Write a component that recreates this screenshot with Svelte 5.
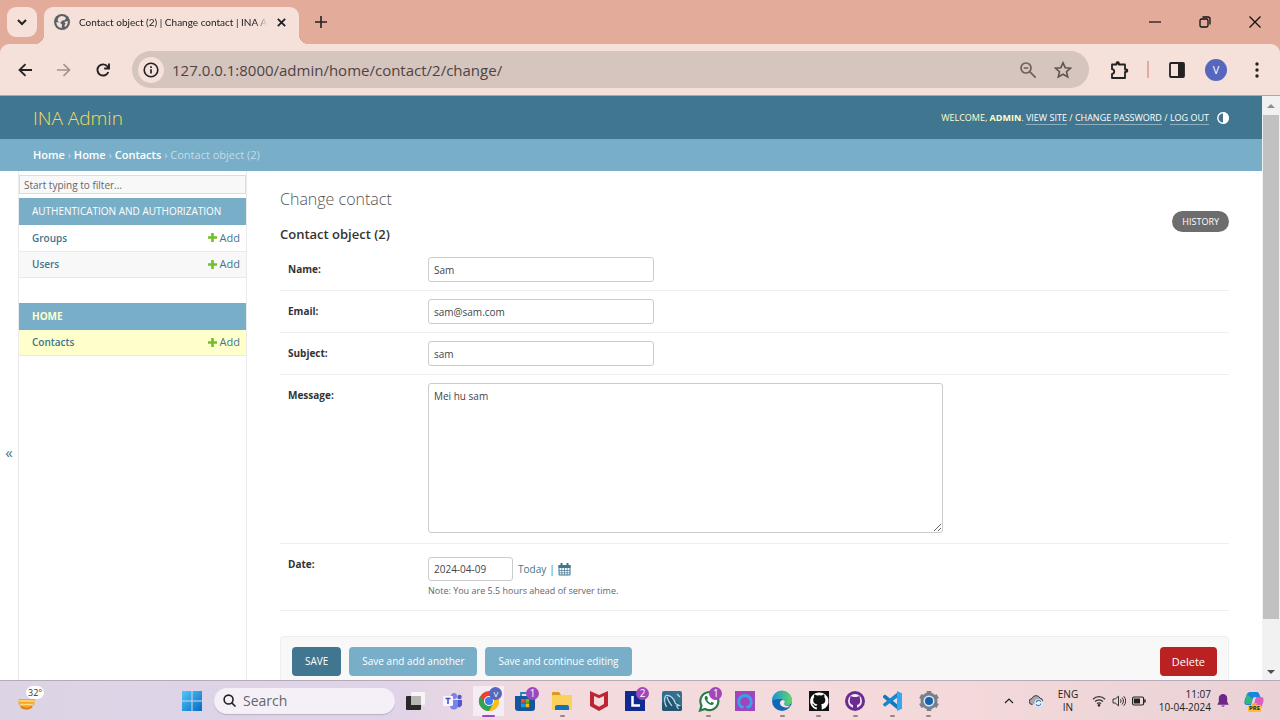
<script lang="ts">
	let contact = $state({
		name: 'Sam',
		email: 'sam@sam.com',
		subject: 'sam',
		message: 'Mei hu sam',
		date: '2024-04-09'
	});
	let address = $state('127.0.0.1:8000/admin/home/contact/2/change/');
	let filter = $state('');
	let search = $state('');

	const apps = [
		{ label: 'AUTHENTICATION AND AUTHORIZATION', current: false, models: ['Groups', 'Users'] },
		{ label: 'HOME', current: true, models: ['Contacts'] }
	];

	const taskbar = [
		{ id: 'taskview', label: 'Task view' },
		{ id: 'teams', label: 'Teams' },
		{ id: 'chrome', label: 'Chrome', active: true },
		{ id: 'store', label: 'Store', badge: '1' },
		{ id: 'files', label: 'File Explorer', running: true },
		{ id: 'mcafee', label: 'McAfee' },
		{ id: 'lenovo', label: 'Lenovo', badge: '2' },
		{ id: 'mysql', label: 'MySQL Workbench' },
		{ id: 'whatsapp', label: 'WhatsApp', badge: '1', running: true },
		{ id: 'alexa', label: 'Alexa' },
		{ id: 'edge', label: 'Edge', running: true },
		{ id: 'github', label: 'GitHub', running: true },
		{ id: 'desktop', label: 'GitHub Desktop', running: true },
		{ id: 'vscode', label: 'VS Code', running: true },
		{ id: 'settings', label: 'Settings', running: true }
	];
</script>

{#snippet cat()}
	<path d="M12 3.5a8.7 8.7 0 0 0-2.8 17c.5.1.6-.2.6-.5v-1.8c-2.4.5-3-1-3.2-1.6-.2-.4-.6-1-1-1.2-.4-.2-.9-.7 0-.7.8 0 1.300.7 1.500 1 .9 1.500 2.300 1.100 2.800.8.1-.6.4-1 .6-1.300-2.100-.2-4.300-1-4.300-4.500 0-1 .4-1.900 1-2.500-.1-.3-.4-1.300.1-2.600 0 0 .8-.3 2.600 1a9 9 0 0 1 4.700 0c1.800-1.300 2.600-1 2.600-1 .5 1.300.2 2.300.1 2.600.6.6 1 1.500 1 2.500 0 3.500-2.200 4.300-4.300 4.500.4.3.7.9.7 1.800V20c0 .3.1.6.6.5A8.700 8.700 0 0 0 12 3.500z" />
{/snippet}

<div class="screen">
	<header class="browser">
		<div class="tabs">
			<button class="tab-search" aria-label="Search tabs">
				<svg viewBox="0 0 12 12" width="12" height="12"><path d="M2 4l4 4 4-4" fill="none" stroke="#222" stroke-width="2" /></svg>
			</button>
			<div class="tab">
				<svg viewBox="0 0 16 16" width="16" height="16">
					<circle cx="8" cy="8" r="8" fill="#5b6066" />
					<path d="M7.500 2c1.800 0 3.500.8 4.500 2.200l-1.500 2-2.500.3-.8 1.700-2.300.2L3.500 6C4 3.800 5.500 2.200 7.500 2zM2.300 8.300l3.500.3 2.200 2-.3 3.300C4.800 13.800 2.500 11.500 2.300 8.300zM13.700 7c.4 2.300-.6 4.600-2.500 5.900l-.9-1.500 1.400-2-1.500-1.400z" fill="#f5e0da" />
				</svg>
				<span class="tab-title">Contact object (2) | Change contact | INA A</span>
				<button class="plain" aria-label="Close tab">
					<svg viewBox="0 0 12 12" width="11" height="11"><path d="M2 2l8 8M10 2l-8 8" stroke="#222" stroke-width="2" /></svg>
				</button>
			</div>
			<button class="plain new-tab" aria-label="New tab">
				<svg viewBox="0 0 12 12" width="12" height="12"><path d="M6 0v12M0 6h12" stroke="#222" stroke-width="1.600" /></svg>
			</button>
			<div class="window-buttons">
				<button class="plain" aria-label="Minimize">
					<svg viewBox="0 0 12 12" width="12" height="12"><path d="M0 6h12" stroke="#111" stroke-width="1.200" /></svg>
				</button>
				<button class="plain" aria-label="Restore">
					<svg viewBox="0 0 12 12" width="12" height="12" fill="none" stroke="#111" stroke-width="1.300">
						<rect x="1" y="3" width="8" height="8" rx="1.500" />
						<path d="M3.500 1h5.500a2 2 0 0 1 2 2v5.500" />
					</svg>
				</button>
				<button class="plain" aria-label="Close">
					<svg viewBox="0 0 12 12" width="12" height="12"><path d="M.5.5l11 11M11.500.5l-11 11" stroke="#111" stroke-width="1.300" /></svg>
				</button>
			</div>
		</div>
		<div class="toolbar">
			<button class="plain nav" aria-label="Back">
				<svg viewBox="0 0 14 14" width="14" height="14" fill="none" stroke="#222" stroke-width="1.800"><path d="M14 7H2M7.500 1.200L1.500 7l6 5.800" /></svg>
			</button>
			<button class="plain nav" aria-label="Forward">
				<svg viewBox="0 0 14 14" width="14" height="14" fill="none" stroke="#a3918c" stroke-width="1.600"><path d="M0 7h12M6.500 1.200l6 5.800-6 5.800" /></svg>
			</button>
			<button class="plain nav" aria-label="Reload">
				<svg viewBox="0 0 14 14" width="14" height="14" fill="none" stroke="#222" stroke-width="1.900"><path d="M12.300 9A5.600 5.600 0 1 1 11.500 3.500L13 5.200M13 .5v5H8.200" /></svg>
			</button>
			<div class="address">
				<button class="site-info" aria-label="View site information">
					<svg viewBox="0 0 16 16" width="16" height="16"><circle cx="8" cy="8" r="6.800" fill="none" stroke="#222" stroke-width="1.600" /><path d="M8 7.200v4.200M8 4.300v1.700" stroke="#222" stroke-width="1.700" /></svg>
				</button>
				<input type="text" aria-label="Address" bind:value={address} />
				<button class="plain" aria-label="Zoom">
					<svg viewBox="0 0 16 16" width="16" height="16" fill="none" stroke="#6b605d" stroke-width="1.700"><circle cx="6" cy="6" r="5" /><path d="M9.700 9.700l6 6M3.700 6h4.600" /></svg>
				</button>
				<button class="plain star" aria-label="Bookmark">
					<svg viewBox="0 0 18 18" width="18" height="18"><path d="M9 1.800l2.200 4.900 5.300.5-4 3.500 1.200 5.200L9 13.200l-4.700 2.700 1.200-5.200-4-3.500 5.300-.5z" fill="none" stroke="#5f5552" stroke-width="1.600" /></svg>
				</button>
			</div>
			<button class="plain extensions" aria-label="Extensions">
				<svg viewBox="0 0 20 20" width="20" height="20"><path d="M3 4.500h4.500V3.300a1 1 0 0 1 2.400 0v1.200H16v5h1.200a1 1 0 0 1 0 2.400H16V18H3v-4.200c3-.3 3-4.300 0-4.600z" fill="none" stroke="#222" stroke-width="1.800" stroke-linejoin="round" /><path d="M7.200 4.200V3a1.500 1.500 0 0 1 3 0v1.200zM16.500 9.200h1a1.500 1.500 0 0 1 0 3h-1z" fill="#222" /></svg>
			</button>
			<span class="divider"></span>
			<button class="plain panel" aria-label="Side panel">
				<svg viewBox="0 0 16 16" width="16" height="16"><rect x="1" y="1" width="14" height="14" rx="1" fill="none" stroke="#222" stroke-width="1.800" /><path d="M9 1h6v14H9z" fill="#222" /></svg>
			</button>
			<button class="avatar" aria-label="Profile">V</button>
			<button class="plain" aria-label="Menu">
				<svg viewBox="0 0 4 16" width="4" height="16" fill="#222"><circle cx="2" cy="2" r="1.700" /><circle cx="2" cy="8" r="1.700" /><circle cx="2" cy="14" r="1.700" /></svg>
			</button>
		</div>
	</header>

	<div class="viewport">
		<div class="page">
			<div class="header">
				<a class="site-name" href="/admin/">INA Admin</a>
				<div class="user-tools">
					<span>
						WELCOME, <strong>ADMIN</strong>. <a href="/">VIEW SITE</a> / <a href="/admin/password_change/">CHANGE PASSWORD</a> / <a href="/admin/logout/">LOG OUT</a>
					</span>
					<button class="plain theme" aria-label="Toggle theme">
						<svg viewBox="0 0 12 12" width="12" height="12"><circle cx="6" cy="6" r="5.200" fill="none" stroke="#fff" stroke-width="1.400" /><path d="M6 0a6 6 0 0 1 0 12z" fill="#fff" /></svg>
					</button>
				</div>
			</div>
			<nav class="breadcrumbs">
				<a href="/admin/">Home</a> › <a href="/admin/home/">Home</a> › <a href="/admin/home/contact/">Contacts</a> › Contact object (2)
			</nav>
			<div class="main">
				<button class="nav-toggle" aria-label="Toggle navigation">«</button>
				<aside>
					<input class="filter" type="search" placeholder="Start typing to filter..." aria-label="Filter navigation items" bind:value={filter} />
					{#each apps as app}
						<table class:current={app.current}>
							<caption>{app.label}</caption>
							<tbody>
								{#each app.models as model}
									<tr>
										<th scope="row"><a href="/admin/">{model}</a></th>
										<td>
											<a href="/admin/">
												<svg viewBox="0 0 9 9" width="9" height="9"><path d="M4.500 0v9M0 4.500h9" stroke="#70bf2b" stroke-width="2.600" /></svg>
												Add
											</a>
										</td>
									</tr>
								{/each}
							</tbody>
						</table>
					{/each}
				</aside>
				<main>
					<div class="title-row">
						<h1>Change contact</h1>
						<a class="history" href="/admin/history/">HISTORY</a>
					</div>
					<h2>Contact object (2)</h2>
					<form onsubmit={(e) => e.preventDefault()}>
						<div class="row">
							<label for="name">Name:</label>
							<input id="name" type="text" bind:value={contact.name} />
						</div>
						<div class="row">
							<label for="email">Email:</label>
							<input id="email" type="text" bind:value={contact.email} />
						</div>
						<div class="row">
							<label for="subject">Subject:</label>
							<input id="subject" type="text" bind:value={contact.subject} />
						</div>
						<div class="row">
							<label for="message">Message:</label>
							<textarea id="message" bind:value={contact.message}></textarea>
						</div>
						<div class="row date-row">
							<label for="date">Date:</label>
							<div>
								<div class="date">
									<input id="date" type="text" bind:value={contact.date} />
									<a href="#today">Today</a> |
									<a href="#calendar" aria-label="Choose a date">
										<svg viewBox="0 0 13 13" width="13" height="13">
											<path d="M1 2.500h11V12H1z" fill="#fff" stroke="#417690" />
											<path d="M.5 2h12v3H.5z" fill="#417690" />
											<path d="M3.500 0v3M9.500 0v3" stroke="#417690" stroke-width="2" />
											<path d="M1 7.500h11M1 9.800h11M3.800 5v7M6.500 5v7M9.200 5v7" stroke="#417690" stroke-width=".7" />
										</svg>
									</a>
								</div>
								<p class="note">Note: You are 5.5 hours ahead of server time.</p>
							</div>
						</div>
						<div class="submit-row">
							<button class="save">SAVE</button>
							<button>Save and add another</button>
							<button>Save and continue editing</button>
							<a class="delete" href="/admin/delete/">Delete</a>
						</div>
					</form>
				</main>
			</div>
		</div>
		<div class="scrollbar">
			<svg viewBox="0 0 10 5" width="8" height="4"><path d="M5 0l5 5H0z" fill="#8f8f8f" /></svg>
			<div class="track"><div class="thumb"></div></div>
			<svg viewBox="0 0 10 5" width="8" height="4"><path d="M0 0h10L5 5z" fill="#505050" /></svg>
		</div>
	</div>

	<footer class="taskbar">
		<button class="plain weather" aria-label="Weather">
			<svg viewBox="0 0 18 16" width="18" height="16">
				<path d="M1 5a8 8 0 0 0 1 7.500A9 7 0 0 0 16 11l1-6z" fill="#f5a623" />
				<path d="M1 7h15M2 10.500h13" stroke="#ffdc8a" stroke-width="1.500" />
				<path d="M3 12.800c4 2.500 8 2.200 11 0" stroke="#e27d12" stroke-width="2" fill="none" />
			</svg>
			<span>32°</span>
		</button>
		<div class="start-group">
			<button class="plain start" aria-label="Start">
				<svg viewBox="0 0 20 20" width="20" height="20">
					<defs><linearGradient id="win" x1="0" y1="0" x2="1" y2="1"><stop offset="0" stop-color="#4fc9f7" /><stop offset="1" stop-color="#0669c6" /></linearGradient></defs>
					<path d="M0 0h9.500v9.500H0zM10.500 0H20v9.500h-9.500zM0 10.500h9.500V20H0zM10.500 10.500H20V20h-9.500z" fill="url(#win)" />
				</svg>
			</button>
			<label class="search">
				<svg viewBox="0 0 14 14" width="13" height="13" fill="none" stroke="#222" stroke-width="1.700"><circle cx="6" cy="6" r="4.800" /><path d="M9.500 9.500l4 4" /></svg>
				<input type="text" placeholder="Search" aria-label="Search Windows" bind:value={search} />
			</label>
		</div>
		<div class="apps">
			{#each taskbar as app}
				<button class="app" class:active={app.active} class:running={app.running} aria-label={app.label}>
					<svg viewBox="0 0 24 24" width="24" height="24">
						{#if app.id === 'taskview'}
							<rect x="3" y="7" width="15" height="14" rx="1" fill="#292929" />
							<rect x="8" y="3" width="14" height="13" rx="1" fill="#f6f4f4" />
							<path d="M8 7h10v9H8z" fill="#b8b6b4" />
						{:else if app.id === 'teams'}
							<circle cx="14" cy="7" r="3" fill="#7b83eb" />
							<circle cx="19.500" cy="8" r="2.200" fill="#5059c9" />
							<path d="M16 11h6v4.500a3 3 0 0 1-5 2z" fill="#5059c9" />
							<path d="M10 11h8v5a4 4 0 0 1-8 1z" fill="#7b83eb" />
							<rect x="3" y="7" width="10" height="10" rx="1" fill="#f7f5fd" />
							<path d="M5.500 9.500h5M8 9.500V15" stroke="#464eb8" stroke-width="1.500" />
						{:else if app.id === 'chrome'}
							<circle cx="12" cy="12" r="10" fill="#e94235" />
							<path d="M3.300 7A10 10 0 0 0 12 22l4.300-7.500H7.700z" fill="#31a354" />
							<path d="M12 22a10 10 0 0 0 8.700-15H12l4.300 7.500z" fill="#fbc116" />
							<circle cx="12" cy="12" r="5" fill="#fff" />
							<circle cx="12" cy="12" r="4" fill="#3b7ded" />
						{:else if app.id === 'store'}
							<path d="M8 7V4h8v3" fill="none" stroke="#1a84c7" stroke-width="1.800" />
							<path d="M2 7h20v12a3 3 0 0 1-3 3H5a3 3 0 0 1-3-3z" fill="#17559b" />
							<path d="M8 10h3.700v3.700H8z" fill="#f25022" /><path d="M12.500 10h3.700v3.700h-3.700z" fill="#7fba00" /><path d="M8 14.500h3.700v3.700H8z" fill="#00a4ef" /><path d="M12.500 14.500h3.700v3.700h-3.700z" fill="#ffb900" />
						{:else if app.id === 'files'}
							<path d="M2 4a1 1 0 0 1 1-1h6l2 3h10a1 1 0 0 1 1 1v4H2z" fill="#d99a1e" />
							<rect x="2" y="6" width="20" height="15" rx="1" fill="#fbd05b" />
							<path d="M5 21v-3a2 2 0 0 1 2-2h10a2 2 0 0 1 2 2v3z" fill="#1473b8" />
						{:else if app.id === 'mcafee'}
							<path d="M3 2l9 4 9-4v15l-9 5-9-5zm4 5v8l5 2.800 5-2.800V7l-5 2.300z" fill="#bd2532" fill-rule="evenodd" />
						{:else if app.id === 'lenovo'}
							<rect x="2" y="2" width="20" height="20" fill="#102a91" />
							<path d="M9.500 7v9.500H17" fill="none" stroke="#fff" stroke-width="2.500" />
						{:else if app.id === 'mysql'}
							<rect x="2" y="2" width="20" height="20" rx="2" fill="#34708d" />
							<path d="M2 14l8-7 12 10v3a2 2 0 0 1-2 2H4a2 2 0 0 1-2-2z" fill="#235673" />
							<path d="M6.500 18c-2.500-5-2.500-10-.5-11.500 4-1 8 3 9.500 8l4 2-3 .5 2 3M7 8c1 4 3 6 5 9M17 5l3 3" fill="none" stroke="#b5dce9" stroke-width="1.200" />
						{:else if app.id === 'whatsapp'}
							<path d="M3 21.500l1.500-5A9 9 0 1 1 8 20z" fill="#fff" stroke="#2c7a49" stroke-width="2.200" />
							<path d="M8.500 7c-1.300 1-1.200 2.800.3 5 1.700 2.500 4 4 6 4 1.500-.2 2.200-1.200 2-2.200l-2.300-1-1 1.200c-1.500-.5-2.700-1.700-3.300-3.200l.8-1L10 7z" fill="#2c7a49" />
						{:else if app.id === 'alexa'}
							<rect x="2" y="2" width="20" height="20" fill="#a145bd" />
							<path d="M9.500 18.500a6.300 6.300 0 1 1 5 0" fill="none" stroke="#35a3ed" stroke-width="3" />
							<path d="M9 19l1.500-2M15 19l-1.500-2" stroke="#35a3ed" stroke-width="2" />
						{:else if app.id === 'edge'}
							<defs><linearGradient id="edge" x1="0" x2="1"><stop offset="0" stop-color="#1790dd" /><stop offset="1" stop-color="#64d863" /></linearGradient></defs>
							<circle cx="12" cy="12" r="10" fill="#1268b5" />
							<path d="M2 12a10 10 0 0 1 20-1c.3 4-3 6-7 5-1-.3-1.500-1-1-2 .5-2-1-4-4-4-4-.3-7 1-8 3z" fill="url(#edge)" />
							<path d="M10 13c-.5 3 2 5.500 7 5.500l4-2c-3 .8-7 .3-7-1.800l.7-1.700c0-1.200-1-2-2-2s-2 .7-2.700 2z" fill="#f5e5ea" />
						{:else if app.id === 'github'}
							<rect x="2" y="2" width="20" height="20" fill="#111" />
							<g fill="#fff">{@render cat()}</g>
						{:else if app.id === 'desktop'}
							<circle cx="12" cy="12" r="10" fill="#6b2c91" />
							<circle cx="12" cy="12" r="7" fill="#f6eaf6" />
							<path d="M7.500 7l3 1h3l3-1 .5 3c1 4-1 5.500-3 6v4.500h-4V16c-2-.5-4-2-3-6z" fill="#6b2c91" />
						{:else if app.id === 'vscode'}
							<path d="M3 7l2-1.500L18 16v5L3 8.500z" fill="#1377be" />
							<path d="M3 16l2 1.700L18 8V3L3 15z" fill="#1488d2" />
							<path d="M17 2l5 2.300v15.400L17 22z" fill="#35a6ef" />
						{:else if app.id === 'settings'}
							<circle cx="12" cy="12" r="8.500" fill="#78818a" />
							<path d="M12 2v20M3.300 7l17.400 10M3.300 17L20.700 7" stroke="#78818a" stroke-width="4.500" />
							<circle cx="12" cy="12" r="5.500" fill="#dfe6ec" />
							<circle cx="12" cy="12" r="4" fill="#1563b0" />
						{/if}
					</svg>
					{#if app.badge}<span class="badge">{app.badge}</span>{/if}
					{#if app.active}<span class="badge profile">V</span>{/if}
				</button>
			{/each}
		</div>
		<div class="tray">
			<button class="plain" aria-label="Hidden icons">
				<svg viewBox="0 0 10 10" width="10" height="10"><path d="M1 7l4-4 4 4" fill="none" stroke="#222" stroke-width="1.200" /></svg>
			</button>
			<svg viewBox="0 0 14 12" width="14" height="12">
				<path d="M3.500 9.500a3 3 0 0 1-.5-6 4.300 4.300 0 0 1 8-.3 2.700 2.700 0 0 1 2.500 3" fill="#aaa6a7" stroke="#3c3939" />
				<circle cx="9.500" cy="8" r="4" fill="#e9f3fb" />
				<path d="M7 7.500a2.700 2.700 0 0 1 5-.8M12 8.500a2.700 2.700 0 0 1-5 .8" fill="none" stroke="#2b83c9" stroke-width="1.200" />
			</svg>
			<span class="language">ENG<br />IN</span>
			<button class="status" aria-label="Quick settings">
				<svg viewBox="0 0 14 12" width="14" height="12" fill="none" stroke="#333" stroke-width="1.200"><path d="M1 4.200a8.500 8.500 0 0 1 12 0M3 6.500a5.600 5.600 0 0 1 8 0M5 8.700a2.800 2.800 0 0 1 4 0" /><circle cx="7" cy="10.300" r=".8" fill="#222" /></svg>
				<svg viewBox="0 0 14 12" width="14" height="12" fill="none" stroke="#333"><path d="M1 4h2.200L6.500 1.200v9.600L3.200 8H1zM8.500 4.200a3 3 0 0 1 0 3.600M10 2.500a5 5 0 0 1 0 7M11.800 1.200a7 7 0 0 1 0 9.600" /></svg>
				<svg viewBox="0 0 14 10" width="14" height="10"><rect x=".6" y="1" width="11" height="8" rx="1.500" fill="none" stroke="#222" stroke-width="1.200" /><path d="M2 2.500h6v5H2zM12.200 3.500h1.500v3h-1.500z" fill="#222" /></svg>
			</button>
			<span class="clock">11:07<br />10-04-2024</span>
			<svg class="bell" viewBox="0 0 12 14" width="12" height="14"><path d="M6 0a4.200 4.200 0 0 0-4.200 4.200v3.600L.3 10.800h11.400l-1.500-3V4.200A4.200 4.200 0 0 0 6 0zM4.200 11.500a1.900 1.900 0 0 0 3.600 0z" fill="#6d2788" /></svg>
			<button class="copilot" aria-label="Copilot">
				<svg viewBox="0 0 20 18" width="20" height="18">
					<path d="M7 0h6c2 0 2.500 3 3.500 5H11c-1.500 0-2 .8-2.500 2.500L7 13H3c-3 0-3-3-2-6l2-5c.7-1.600 2-2 4-2z" fill="#1687dc" />
					<path d="M3 2c-1 3-3 8-1 10h5l1.500-5z" fill="#33b77f" />
					<path d="M12 5h5c3 0 3 3 2 6l-2 5c-.7 1.500-2 2-4 2H7l2-2z" fill="#da5fc0" />
					<path d="M8 12l2-1h3l-2 7H7z" fill="#f7a43b" />
				</svg>
				<span>PRE</span>
			</button>
		</div>
	</footer>
</div>

<style>
	:global(body) {
		margin: 0;
	}
	.screen {
		display: flex;
		flex-direction: column;
		height: 100vh;
		overflow: hidden;
		font-family: 'Open Sans', 'Noto Sans', sans-serif;
		font-size: 11px;
		color: #333;
		background: #fff;
	}
	.screen *,
	.screen *::before {
		box-sizing: border-box;
	}
	svg {
		display: block;
		flex: none;
	}
	button,
	input,
	textarea {
		font: inherit;
		color: inherit;
	}
	button {
		padding: 0;
		border: 0;
		cursor: pointer;
	}
	a {
		color: #417690;
		text-decoration: none;
	}
	.plain {
		background: none;
		display: flex;
		align-items: center;
		justify-content: center;
	}

	/* browser chrome */
	.browser {
		flex: none;
		background: #e3ab99;
	}
	.tabs {
		display: flex;
		align-items: center;
		height: 44px;
		padding-left: 7px;
	}
	.tab-search {
		display: flex;
		align-items: center;
		justify-content: center;
		width: 30px;
		height: 30px;
		border-radius: 9px;
		background: #f5e0da;
	}
	.tab {
		position: relative;
		display: flex;
		align-items: center;
		align-self: flex-end;
		gap: 9px;
		width: 255px;
		height: 37px;
		margin-left: 7px;
		padding: 0 12px 7px 10px;
		border-radius: 9px 9px 0 0;
		background: #f5e0da;
	}
	.tab::before {
		content: '';
		position: absolute;
		bottom: 0;
		left: -9px;
		right: -9px;
		height: 9px;
		background:
			radial-gradient(circle at 0 0, transparent 9px, #f5e0da 9px) left / 9px 9px no-repeat,
			radial-gradient(circle at 100% 0, transparent 9px, #f5e0da 9px) right / 9px 9px no-repeat;
	}
	.tab-title {
		flex: 1;
		overflow: hidden;
		white-space: nowrap;
		font-family: Lato, 'Open Sans', sans-serif;
		font-size: 10px;
		color: #222;
		mask-image: linear-gradient(90deg, #000 94%, transparent);
	}
	.new-tab {
		margin-left: 16px;
	}
	.window-buttons {
		display: flex;
		gap: 38px;
		margin-left: auto;
		padding-right: 19px;
	}
	.toolbar {
		display: flex;
		align-items: center;
		height: 52px;
		padding: 0 21px 0 18px;
		border-bottom: 1px solid #b5a5a1;
		border-radius: 9px 9px 0 0;
		background: #f5e0da;
	}
	.nav {
		width: 14px;
		margin-right: 25px;
	}
	.nav:nth-child(3) {
		margin-right: 22px;
	}
	.address {
		flex: 1;
		display: flex;
		align-items: center;
		height: 37px;
		padding: 0 17px 0 6px;
		border-radius: 19px;
		background: #d6c4be;
	}
	.site-info {
		display: flex;
		align-items: center;
		justify-content: center;
		width: 26px;
		height: 26px;
		border-radius: 50%;
		background: #f5e0da;
	}
	.address input {
		flex: 1;
		min-width: 0;
		padding: 0 0 0 8px;
		border: 0;
		outline: 0;
		background: none;
		font-size: 15px;
		color: #4c4442;
	}
	.star {
		margin-left: 18px;
	}
	.extensions {
		margin-left: 20px;
	}
	.divider {
		width: 2px;
		height: 17px;
		margin: 0 20px 0 18px;
		background: #e3ab99;
	}
	.avatar {
		width: 22px;
		height: 22px;
		margin: 0 28px 0 20px;
		border-radius: 50%;
		background: #5667bd;
		color: #fff;
	}

	/* admin page */
	.viewport {
		flex: 1;
		min-height: 0;
		display: flex;
	}
	.page {
		flex: 1;
		min-width: 0;
		display: flex;
		flex-direction: column;
		overflow: hidden;
	}
	.header {
		flex: none;
		display: flex;
		align-items: center;
		justify-content: space-between;
		height: 43px;
		padding: 0 33px;
		background: #417690;
	}
	.site-name {
		font-size: 19px;
		font-weight: 300;
		color: #f5dd5d;
	}
	.user-tools {
		display: flex;
		align-items: center;
		gap: 8px;
		font-size: 9px;
		line-height: 11px;
		color: #ffc;
	}
	.user-tools a {
		border-bottom: 1px solid #8cb0c2;
		color: #fff;
	}
	.breadcrumbs {
		flex: none;
		height: 32px;
		padding-left: 33px;
		background: #79aec8;
		color: #c4dce8;
		line-height: 32px;
	}
	.breadcrumbs a {
		color: #fff;
		font-weight: 600;
	}
	.main {
		flex: 1;
		min-height: 0;
		display: flex;
	}
	.nav-toggle {
		width: 19px;
		border-right: 1px solid #eaeaea;
		background: #fff;
		color: #417690;
		font-size: 15px;
		padding-top: 52px;
	}
	aside {
		flex: none;
		width: 228px;
		padding-top: 4px;
		border-right: 1px solid #eaeaea;
	}
	.filter {
		display: block;
		width: 100%;
		height: 19px;
		margin-bottom: 4px;
		padding: 0 4px;
		border: 1px solid #ddd;
		background: #f8f8f8;
		font-size: 10px;
		outline: 0;
	}
	.filter::placeholder,
	.search input::placeholder {
		color: #666;
		opacity: 1;
	}
	table {
		width: 100%;
		margin-bottom: 25px;
		border-collapse: collapse;
	}
	caption {
		height: 27px;
		padding-left: 13px;
		background: #79aec8;
		color: #fff;
		font-size: 10px;
		line-height: 27px;
		text-align: left;
	}
	.current caption {
		color: #ffc;
		font-weight: 700;
	}
	th,
	td {
		height: 26px;
		padding: 0 6px 0 13px;
		border-bottom: 1px solid #eaeaea;
		line-height: 16px;
	}
	th {
		text-align: left;
		font-size: 10px;
		font-weight: 600;
	}
	td a {
		display: flex;
		align-items: center;
		justify-content: flex-end;
		gap: 3px;
	}
	tr:nth-child(even) {
		background: #f8f8f8;
	}
	.current tr {
		background: #ffc;
	}
	main {
		flex: 1;
		padding: 17px 33px 0;
	}
	.title-row {
		display: flex;
		justify-content: space-between;
		height: 38px;
	}
	h1 {
		margin: 0;
		font-size: 16px;
		font-weight: 300;
		line-height: 23px;
		color: #555;
	}
	.history {
		height: 21px;
		margin-top: 23px;
		padding: 0 10px;
		border-radius: 11px;
		background: #6d6d6d;
		color: #fff;
		font-size: 9px;
		line-height: 21px;
	}
	h2 {
		margin: 0 0 6px;
		font-size: 13px;
		font-weight: 600;
		line-height: 17px;
	}
	.row {
		display: flex;
		align-items: flex-start;
		padding: 8px;
		border-bottom: 1px solid #eee;
	}
	.row label {
		width: 140px;
		color: #333;
		font-size: 10px;
		font-weight: 700;
		line-height: 25px;
	}
	.row input,
	.row textarea {
		display: block;
		width: 226px;
		height: 25px;
		padding: 0 5px;
		border: 1px solid #ccc;
		border-radius: 3px;
		outline: 0;
		background: #fff;
		color: #444;
		font-size: 10px;
	}
	.row textarea {
		width: 515px;
		height: 150px;
		margin-bottom: 2px;
		padding: 4px 5px;
		line-height: 16px;
	}
	.date-row {
		padding-bottom: 11px;
	}
	.date {
		display: flex;
		align-items: center;
		gap: 3px;
		margin-top: 5px;
		color: #417690;
		font-size: 10px;
	}
	.row .date input {
		width: 85px;
		height: 24px;
		margin-right: 2px;
	}
	.note {
		margin: 2px 0 0;
		font-size: 9px;
		line-height: 16px;
		color: #666;
	}
	.submit-row {
		display: flex;
		gap: 8px;
		margin-top: 25px;
		padding: 10px 11px;
		border: 1px solid #eee;
		border-radius: 4px;
		background: #f8f8f8;
	}
	.submit-row button,
	.delete {
		height: 29px;
		padding: 0 13px;
		border-radius: 4px;
		background: #79aec8;
		color: #fff;
		font-size: 10px;
		line-height: 29px;
	}
	.submit-row .save {
		background: #417690;
	}
	.submit-row .delete {
		margin-left: auto;
		padding: 0 12px;
		background: #ba2121;
		font-size: 11px;
	}
	.scrollbar {
		display: flex;
		flex-direction: column;
		align-items: center;
		width: 18px;
		padding: 8px 1px 6px;
		background: #f1f1f1;
	}
	.track {
		flex: 1;
		width: 100%;
		padding: 7px 0;
	}
	.thumb {
		height: 92%;
		background: #c1c1c1;
	}

	/* taskbar */
	.taskbar {
		flex: none;
		display: flex;
		align-items: center;
		height: 40px;
		border-top: 1px solid #b7abb8;
		background: linear-gradient(90deg, #dcd4e5, #dfd3e8 30%, #f3dbdd 43%, #f3d9da 75%, #e9d1d6);
	}
	.weather {
		position: relative;
		width: 48px;
		height: 39px;
		padding: 2px 0 0 6px;
	}
	.weather span {
		position: absolute;
		top: 5px;
		left: 26px;
		padding: 0 2px;
		border-radius: 7px;
		background: #fff;
		font-size: 9px;
		line-height: 13px;
	}
	.start-group {
		display: flex;
		align-items: center;
		gap: 12px;
		margin-left: auto;
	}
	.search {
		display: flex;
		align-items: center;
		gap: 7px;
		width: 181px;
		height: 26px;
		padding: 0 9px;
		border-radius: 13px;
		background: #f5f0f8;
		box-shadow: 0 1px 1px #b9aebd;
	}
	.search input {
		flex: 1;
		min-width: 0;
		padding: 0;
		border: 0;
		outline: 0;
		background: none;
		font-size: 14px;
	}
	.apps {
		display: flex;
		width: 550px;
		margin-left: 2px;
	}
	.app {
		position: relative;
		flex: 1;
		display: flex;
		justify-content: center;
		padding: 7px 0;
		border-radius: 3px;
		background: none;
	}
	.app.active {
		background: linear-gradient(#f6ecf5, #f6ecf5) center / 31px 30px no-repeat;
	}
	.app.running::before,
	.app.active::before {
		content: '';
		position: absolute;
		bottom: 3px;
		width: 5px;
		height: 2px;
		border-radius: 1px;
		background: #99828a;
	}
	.app.active::before {
		width: 13px;
		background: #a147bd;
	}
	.badge {
		position: absolute;
		top: 5px;
		left: 19px;
		width: 13px;
		height: 13px;
		border-radius: 50%;
		background: #a147bd;
		color: #fff;
		font-size: 10px;
		line-height: 13px;
	}
	.badge.profile {
		background: #5667bd;
		font-size: 8px;
	}
	.tray {
		flex: none;
		display: flex;
		align-items: center;
		margin-left: 57px;
		padding-right: 16px;
		font-size: 10px;
		line-height: 13px;
		color: #222;
	}
	.tray > svg:nth-child(2) {
		margin-left: 15px;
	}
	.language {
		width: 24px;
		margin-left: 13px;
		text-align: center;
	}
	.status {
		display: flex;
		align-items: center;
		gap: 6px;
		margin-left: 12px;
		background: none;
	}
	.clock {
		width: 65px;
		text-align: right;
	}
	.bell {
		margin-left: 6px;
	}
	.copilot {
		position: relative;
		margin-left: 15px;
		background: none;
	}
	.copilot span {
		position: absolute;
		left: 4px;
		bottom: -2px;
		padding: 0 1px;
		border-radius: 1px;
		background: #ffbd3d;
		font-size: 6px;
		font-weight: 700;
		line-height: 7px;
	}
</style>
